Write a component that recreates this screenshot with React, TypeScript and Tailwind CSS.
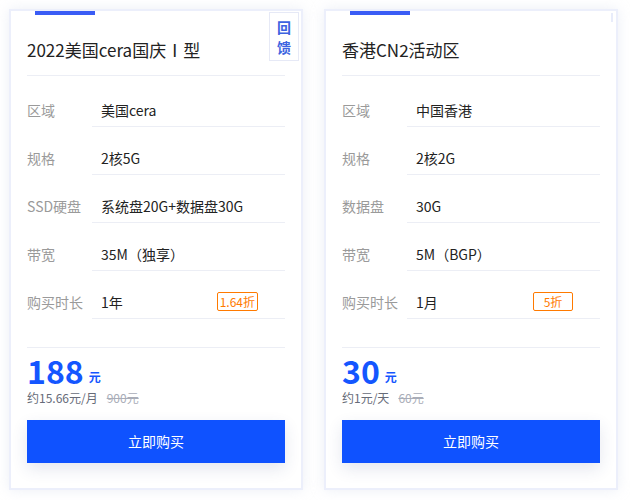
import React from "react";

type Row = { label: string; value: string; discount?: string };

const cards: {
  title: string;
  rows: Row[];
  price: string;
  sub: string;
  orig: string;
  badge?: boolean;
}[] = [
  {
    title: "2022美国cera国庆Ⅰ型",
    rows: [
      { label: "区域", value: "美国cera" },
      { label: "规格", value: "2核5G" },
      { label: "SSD硬盘", value: "系统盘20G+数据盘30G" },
      { label: "带宽", value: "35M（独享）" },
      { label: "购买时长", value: "1年", discount: "1.64折" },
    ],
    price: "188",
    sub: "约15.66元/月",
    orig: "900元",
    badge: true,
  },
  {
    title: "香港CN2活动区",
    rows: [
      { label: "区域", value: "中国香港" },
      { label: "规格", value: "2核2G" },
      { label: "数据盘", value: "30G" },
      { label: "带宽", value: "5M（BGP）" },
      { label: "购买时长", value: "1月", discount: "5折" },
    ],
    price: "30",
    sub: "约1元/天",
    orig: "60元",
  },
];

function Card({ c }: { c: (typeof cards)[number] }) {
  return (
    <div className="relative w-[294px] h-[481px] border-2 border-[#eceffb] bg-white shadow-[0_0_12px_rgba(200,208,230,0.35)] px-[16px]">
      <div className="absolute left-[24px] top-0 w-[60px] h-[4px] bg-[#3a5cf5]" />
      {c.badge ? (
        <div className="absolute right-[2px] top-[1px] w-[30px] h-[49px] border border-[#e6e9f6] bg-white flex flex-col items-center justify-center text-[14px] leading-[20px] font-bold text-[#3d63e0]">
          <span>回</span>
          <span>馈</span>
        </div>
      ) : (
        <div className="absolute right-[3px] top-[2px] w-[2px] h-[9px] bg-[#e8ecfa]" />
      )}
      <div className="pt-[27px] h-[65px] border-b border-[#eceef5] text-[17px] leading-[24px] text-[#222]">
        {c.title}
      </div>
      <div className="pt-[3px]">
        {c.rows.map((r) => (
          <div key={r.label} className="flex h-[48px]">
            <div className="w-[65px] flex items-end pb-[7px] text-[14px] leading-[20px] text-[#9a9a9a]">
              {r.label}
            </div>
            <div className="flex-1 flex items-end justify-between pb-[6px] pl-[9px] pr-[27px] border-b border-[#eceef5] text-[14px] leading-[20px] text-[#222]">
              <span>{r.value}</span>
              {r.discount && (
                <span className="mb-[1px] h-[19px] px-[2px] border border-[#ff7a00] rounded-[2px] text-[12px] leading-[17px] text-[#ff7a00] min-w-[40px] text-center">
                  {r.discount}
                </span>
              )}
            </div>
          </div>
        ))}
      </div>
      <div className="mt-[28px] border-t border-[#eceef5] pt-[4px]">
        <div className="flex items-end text-[#1456ff]">
          <span className="text-[32px] leading-[36px] font-bold">{c.price}</span>
          <span className="ml-[5px] mb-[4px] text-[12px] leading-[14px] font-bold">元</span>
        </div>
        <div className="flex items-center text-[12px] leading-[18px] mt-[1px]">
          <span className="text-[#666b78]">{c.sub}</span>
          <span className="ml-[9px] text-[#a9adb8] line-through">{c.orig}</span>
        </div>
      </div>
      <button className="mt-[13px] w-full h-[43px] bg-[#0f52ff] text-white text-[14px] shadow-[0_6px_16px_rgba(40,60,120,0.12)]">
        立即购买
      </button>
    </div>
  );
}

export default function App() {
  return (
    <div
      className="w-[630px] h-[500px] bg-white overflow-hidden flex gap-[21px] pl-[9px] pt-[9px]"
      style={{ fontFamily: '"Noto Sans CJK SC", "Noto Sans", sans-serif' }}
    >
      {cards.map((c) => (
        <Card key={c.title} c={c} />
      ))}
    </div>
  );
}
